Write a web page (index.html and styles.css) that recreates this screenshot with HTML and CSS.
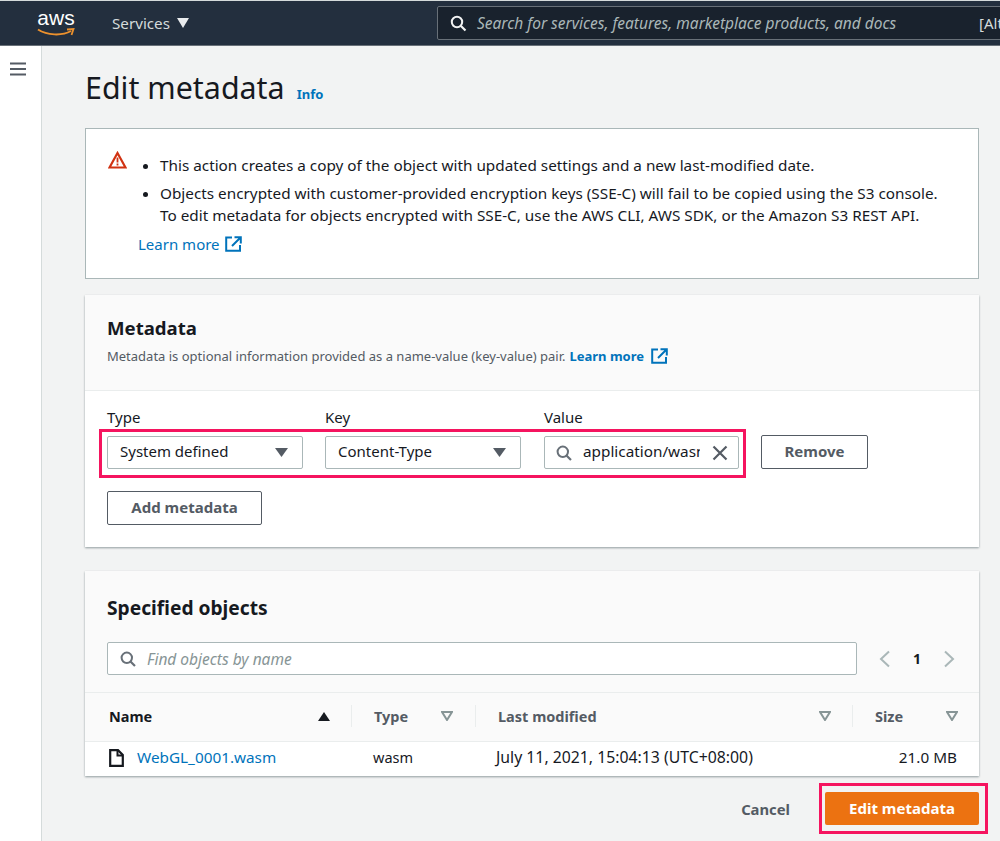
FILE: index.html
```html
<!DOCTYPE html>
<html lang="en">
<head>
<meta charset="utf-8">
<title>Edit metadata</title>
<link rel="stylesheet" href="styles.css">
</head>
<body>
<header class="topbar">
  <div class="logo">
    <span class="logo-text">aws</span>
    <svg class="logo-smile" width="38" height="9" viewBox="0 0 38 9"><path d="M1 1.5C10 7.5 25 8 34 3" fill="none" stroke="#ec912d" stroke-width="2"/><path d="M30 1.5L36.5 1L34.5 7" fill="none" stroke="#ec912d" stroke-width="1.8"/></svg>
  </div>
  <div class="services">Services <svg width="12" height="10" viewBox="0 0 12 10"><path d="M0 0H12L6 10Z" fill="#e9ebed"/></svg></div>
  <div class="topsearch">
    <svg width="17" height="17" viewBox="0 0 17 17"><circle cx="7" cy="7" r="5.2" fill="none" stroke="#f2f3f3" stroke-width="2"/><path d="M11 11L15.5 15.5" stroke="#f2f3f3" stroke-width="2.2"/></svg>
    <span class="topsearch-text">Search for services, features, marketplace products, and docs</span>
    <span class="topsearch-hint">[Alt+S]</span>
  </div>
</header>
<div class="shell">
  <nav class="sidenav">
    <svg width="16" height="14" viewBox="0 0 16 14"><path d="M0 1.5H16M0 7H16M0 12.5H16" stroke="#545b64" stroke-width="2"/></svg>
  </nav>
  <main class="content">
    <div class="titlerow"><h1>Edit metadata</h1><a class="info">Info</a></div>

    <section class="card alert">
      <svg class="warn" width="19" height="18" viewBox="0 0 19 18"><path d="M9.5 2L17.5 16.5H1.5Z" fill="none" stroke="#d13212" stroke-width="2.2" stroke-linejoin="miter"/><path d="M9.5 6.5V11.5M9.5 12.5V14.5" stroke="#d13212" stroke-width="1.8"/></svg>
      <div class="alert-body">
        <ul>
          <li>This action creates a copy of the object with updated settings and a new last-modified date.</li>
          <li>Objects encrypted with customer-provided encryption keys (SSE-C) will fail to be copied using the S3 console.<br>To edit metadata for objects encrypted with SSE-C, use the AWS CLI, AWS SDK, or the Amazon S3 REST API.</li>
        </ul>
        <a class="learn">Learn more <svg width="17" height="16" viewBox="0 0 17 16"><path d="M7 1.5H1.2V14.8H15V9M9.5 1.2H15.8V7.5M15.5 1.5L7 10" fill="none" stroke="#0073bb" stroke-width="2"/></svg></a>
      </div>
    </section>

    <section class="card meta">
      <div class="meta-head">
        <h2>Metadata</h2>
        <p>Metadata is optional information provided as a name-value (key-value) pair. <a class="learn-bold">Learn more <svg width="17" height="16" viewBox="0 0 17 16"><path d="M7 1.5H1.2V14.8H15V9M9.5 1.2H15.8V7.5M15.5 1.5L7 10" fill="none" stroke="#0073bb" stroke-width="2"/></svg></a></p>
      </div>
      <div class="meta-body">
        <div class="fields">
          <div class="highlight-fields"></div>
          <div class="field f-type">
            <label>Type</label>
            <div class="control">System defined<svg class="caret" width="13" height="9" viewBox="0 0 13 9"><path d="M0 0H13L6.5 9Z" fill="#545b64"/></svg></div>
          </div>
          <div class="field f-key">
            <label>Key</label>
            <div class="control">Content-Type<svg class="caret" width="13" height="9" viewBox="0 0 13 9"><path d="M0 0H13L6.5 9Z" fill="#545b64"/></svg></div>
          </div>
          <div class="field f-value">
            <label>Value</label>
            <div class="control control-value">
              <svg width="16" height="16" viewBox="0 0 16 16"><circle cx="6.8" cy="6.8" r="5.2" fill="none" stroke="#687078" stroke-width="2"/><path d="M10.5 10.5L15 15" stroke="#687078" stroke-width="2.2"/></svg>
              <span class="value-text">application/wasm</span>
              <svg width="16" height="16" viewBox="0 0 16 16"><path d="M1.5 1.5L14.5 14.5M14.5 1.5L1.5 14.5" stroke="#545b64" stroke-width="2.2"/></svg>
            </div>
          </div>
          <button class="btn btn-remove">Remove</button>
        </div>
        <button class="btn btn-add">Add metadata</button>
      </div>
    </section>

    <section class="card objects">
      <div class="objects-head">
        <h2>Specified objects</h2>
        <div class="filter-row">
          <div class="filter">
            <svg width="16" height="16" viewBox="0 0 16 16"><circle cx="6.8" cy="6.8" r="5.2" fill="none" stroke="#687078" stroke-width="2"/><path d="M10.5 10.5L15 15" stroke="#687078" stroke-width="2.2"/></svg>
            <span>Find objects by name</span>
          </div>
          <div class="pager">
            <svg width="12" height="18" viewBox="0 0 12 18"><path d="M10 1.5L2 9L10 16.5" fill="none" stroke="#aab7b8" stroke-width="2"/></svg>
            <b>1</b>
            <svg width="12" height="18" viewBox="0 0 12 18"><path d="M2 1.5L10 9L2 16.5" fill="none" stroke="#aab7b8" stroke-width="2"/></svg>
          </div>
        </div>
      </div>
      <div class="tr th">
        <div class="td td-name">Name<svg width="12" height="9" viewBox="0 0 12 9"><path d="M0 9H12L6 0Z" fill="#16191f"/></svg></div>
        <div class="td td-type">Type<svg width="12" height="10" viewBox="0 0 12 10"><path d="M1 1H11L6 9Z" fill="none" stroke="#879596" stroke-width="2"/></svg></div>
        <div class="td td-mod">Last modified<svg width="12" height="10" viewBox="0 0 12 10"><path d="M1 1H11L6 9Z" fill="none" stroke="#879596" stroke-width="2"/></svg></div>
        <div class="td td-size">Size<svg width="12" height="10" viewBox="0 0 12 10"><path d="M1 1H11L6 9Z" fill="none" stroke="#879596" stroke-width="2"/></svg></div>
      </div>
      <div class="tr row">
        <div class="td-name-cell"><svg width="15" height="18" viewBox="0 0 15 18"><path d="M1.2 1.2H9L13.8 6V16.8H1.2Z" fill="none" stroke="#16191f" stroke-width="2.2"/><path d="M8.5 1.5V6.5H13.5" fill="none" stroke="#16191f" stroke-width="2"/></svg><a>WebGL_0001.wasm</a></div>
        <div class="cell-type">wasm</div>
        <div class="cell-mod">July 11, 2021, 15:04:13 (UTC+08:00)</div>
        <div class="cell-size">21.0 MB</div>
      </div>
    </section>

    <footer class="actions">
      <button class="btn-cancel">Cancel</button>
      <div class="primary-wrap"><button class="btn-primary">Edit metadata</button></div>
    </footer>
  </main>
</div>
</body>
</html>
```
FILE: styles.css
```css
* { box-sizing: border-box; }
html, body { margin: 0; height: 841px; overflow: hidden; }
body { font-family: "Noto Sans", "Open Sans", sans-serif; font-size: 15px; color: #16191f; background: #f2f3f3; }
a { color: #0073bb; }
h1, h2, p, ul { margin: 0; }

.topbar { height: 46px; background: #232f3e; border-top: 1px solid #d5dbdb; border-bottom: 1px solid #687078; display: flex; align-items: center; color: #d5dbdb; overflow: hidden; white-space: nowrap; }
.logo { width: 38px; margin-left: 37px; display: flex; flex-direction: column; align-items: center; }
.logo-text { font-family: "Liberation Sans", sans-serif; font-size: 21px; line-height: 16px; color: #fff; }
.logo-smile { margin-top: 2px; }
.services { margin-left: 37px; font-size: 15.2px; display: flex; align-items: center; gap: 7px; width: 79px; flex: none; }
.topsearch { margin-left: 246px; flex: none; width: 640px; height: 34px; background: #19222d; border: 1px solid #687078; border-radius: 2px; display: flex; align-items: center; padding-left: 12px; }
.topsearch svg { flex: none; }
.topsearch-text { margin-left: 10px; font-style: italic; font-size: 15.5px; color: #aab7b8; width: 502px; flex: none; }
.topsearch-hint { font-size: 15px; color: #d5dbdb; }

.shell { display: flex; height: 795px; }
.sidenav { width: 42px; flex: none; background: #fff; border-right: 1px solid #d5dbdb; padding: 14px 0 0 10px; }
.content { flex: none; width: 894px; margin-left: 43px; }

.titlerow { display: flex; align-items: baseline; gap: 12px; height: 82px; padding-top: 21px; }
h1 { font-size: 30.4px; font-weight: 400; line-height: 42px; }
.info { font-size: 13px; font-weight: 700; }

.card { background: #fff; }
.alert { height: 151px; border: 1px solid #aab7b8; display: flex; padding: 22px 0 0 22px; }
.warn { flex: none; }
.alert-body { margin-left: 11px; margin-top: 3px; }
.alert ul { padding: 0 0 0 22px; font-size: 15.3px; line-height: 22px; color: #16191f; }
.alert li { margin-bottom: 6px; }
.learn { display: flex; align-items: center; gap: 5px; font-size: 15px; line-height: 22px; margin-top: 7px; }

.meta { margin-top: 16px; height: 252px; box-shadow: 0 1px 2px rgba(0,28,36,.4); }
.meta-head { height: 96px; background: #fafafa; border-bottom: 1px solid #eaeded; padding: 20px 22px 0; }
h2 { font-size: 18.6px; font-weight: 700; line-height: 26px; }
.objects h2 { font-size: 19.2px; }
.meta-head p { font-size: 13px; line-height: 18px; color: #545b64; margin-top: 6px; display: flex; align-items: center; gap: 4px; white-space: nowrap; }
.learn-bold { font-weight: 700; display: inline-flex; align-items: center; gap: 7px; }
.meta-body { padding: 17px 22px 0; }
.fields { position: relative; display: flex; align-items: flex-end; }
.highlight-fields { position: absolute; left: -8px; top: 21px; width: 647px; height: 49px; border: 3px solid #f5145f; }
.field label { display: block; font-size: 15px; line-height: 18px; height: 28px; }
.f-type { width: 196px; }
.f-key { width: 196px; margin-left: 22px; }
.f-value { width: 195px; margin-left: 23px; }
.control { height: 33px; padding: 0 14px 3px 12px; border: 1px solid #aab7b8; border-radius: 2px; background: #fff; display: flex; align-items: center; justify-content: space-between; font-size: 15px; }
.caret { flex: none; margin-top: 3px; }
.control-value { padding: 0 11px 3px; justify-content: flex-start; }
.control-value svg { flex: none; margin-top: 3px; }
.value-text { width: 117px; margin: 0 12px 0 11px; overflow: hidden; white-space: nowrap; flex: none; font-size: 15.3px; }
.btn { font-family: inherit; font-size: 15px; font-weight: 700; color: #545b64; background: #fff; border: 1px solid #545b64; border-radius: 2px; height: 34px; padding: 0 0 3px; }
.btn-remove { width: 107px; margin-left: 22px; }
.btn-add { display: block; width: 155px; margin-top: 22px; }

.objects { margin-top: 24px; height: 205px; box-shadow: 0 1px 2px rgba(0,28,36,.4); }
.objects-head { height: 122px; background: #fafafa; border-bottom: 1px solid #eaeded; padding: 24px 0 0 22px; }
.filter-row { display: flex; align-items: center; margin-top: 21px; }
.filter { width: 750px; height: 33px; background: #fff; border: 1px solid #aab7b8; border-radius: 2px; display: flex; align-items: center; gap: 11px; padding-left: 12px; font-style: italic; font-size: 15.5px; color: #879596; }
.pager { display: flex; align-items: center; gap: 22px; margin-left: 22px; }
.pager b { font-size: 14px; }
.tr { display: grid; grid-template-columns: 266px 124px 377px 127px; }
.th { height: 49px; background: #fafafa; border-bottom: 1px solid #eaeded; align-items: center; padding-bottom: 2px; }
.td { display: flex; align-items: center; justify-content: space-between; height: 22px; font-weight: 700; font-size: 14.5px; color: #545b64; border-left: 1px solid #eaeded; padding: 0 21px 0 22px; }
.td-name { border-left: 0; padding: 0 21px 0 24px; color: #16191f; }
.td-type { padding-right: 22px; }
.row { height: 34px; align-items: center; font-size: 15.3px; padding-bottom: 5px; }
.td-name-cell { display: flex; align-items: center; gap: 13px; padding-left: 24px; }
.td-name-cell svg { flex: none; margin-top: 3px; }
.cell-type { padding-left: 22px; font-size: 14.5px; }
.cell-mod { padding-left: 21px; font-size: 15.8px; white-space: nowrap; }
.cell-size { text-align: right; padding-right: 22px; }

.actions { display: flex; justify-content: flex-end; align-items: center; margin-top: 16px; }
.btn-cancel { font-family: inherit; font-size: 14.8px; font-weight: 700; color: #545b64; background: none; border: 0; padding: 0; margin-right: 35px; }
.primary-wrap { position: relative; display: flex; }
.primary-wrap::after { content: ""; position: absolute; left: -6px; right: -9px; top: -9px; bottom: -9px; border: 3px solid #f5145f; pointer-events: none; }
.btn-primary { font-family: inherit; width: 154px; height: 33px; background: #ec7211; color: #fff; border: 0; border-radius: 2px; font-size: 15px; font-weight: 700; padding: 0 0 2px; }
```
